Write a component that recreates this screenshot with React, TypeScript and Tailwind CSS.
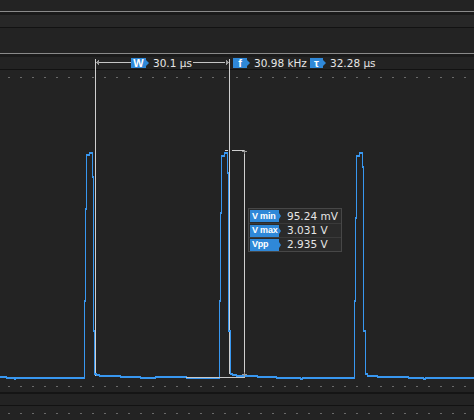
import React from "react";

type TagProps = {
  label: string;
  width: string;
};

// blue marker tag with a small arrow tip on the right
const Tag = ({ label, width }: TagProps) => (
  <span className="flex items-center">
    <span
      className={`flex h-[10px] items-center justify-center bg-[#2f88d8] font-['Liberation_Sans',sans-serif] text-[11px] font-bold leading-none text-white ${width}`}
    >
      {label}
    </span>
    <span className="h-0 w-0 border-y-[3px] border-l-[3px] border-y-transparent border-l-[#2f88d8]" />
  </span>
);

const dots = Array.from({ length: 39 }, (_, i) => 8 + i * 12);

const DotRow = () => (
  <div className="flex gap-[10px] pl-[8px]">
    {dots.map(d => (
      <span key={d} className="h-px w-[2px] shrink-0 bg-[#6a6a6a]" />
    ))}
  </div>
);

const readings = [
  { label: "V min", value: "95.24 mV" },
  { label: "V max", value: "3.031 V" },
  { label: "Vpp", value: "2.935 V" },
];

const wave =
  "M0 376.5 H6 V377.5 H14 V378.5 H15 V377.5 H84.5 V300 H85.5 V208 H86.5 V154 H89 V152.5 H92.5 V176 H93.5 V330 H94.5 V373 H96 V374.5 H99 V375.5 H120 V376.5 H140 V377.5 H155 V376.5 H186 V377.5 H219.5 V300 H220.5 V212 H221.5 V155 H224 V152.5 H227.5 V172 H228.5 V330 H230.5 V373 H232 V374.5 H236 V375.5 H257 V376.5 H276 V377.5 H300 V378.5 H302 V377.5 H354.5 V300 H355.5 V217 H356.5 V155 H359 V152.5 H362.5 V166 H363.5 V330 H365.5 V373 H367 V375.5 H377 V376 H408 V377.5 H423 V378.5 H425 V377.5 H474";

export default function App() {
  return (
    <div className="flex h-[420px] w-[474px] flex-col overflow-hidden bg-[#232323] font-['DejaVu_Sans',sans-serif] text-[#e6e6e6]">
      <div className="h-[11px]" />
      <div className="h-px bg-[#8a8a8a]" />
      <div className="h-[3px] bg-[#1a1a1a]" />
      <div className="h-[12px] bg-[#272727]" />
      <div className="h-px bg-[#121212]" />
      <div className="h-[25px]" />
      <div className="h-px bg-[#8a8a8a]" />
      <div className="h-[3px] bg-[#1a1a1a]" />

      {/* measurement row */}
      <div className="flex h-[12px] items-center pl-[131px] text-[10.5px] leading-[12px]">
        <Tag label="W" width="w-[15px]" />
        <span className="ml-[4px] w-[80px] whitespace-nowrap">30.1 µs</span>
        <Tag label="f" width="w-[14px]" />
        <span className="ml-[4px] w-[56px] whitespace-nowrap">30.98 kHz</span>
        <Tag label="τ" width="w-[13px]" />
        <span className="ml-[4px] whitespace-nowrap">32.28 µs</span>
      </div>
      <div className="h-px bg-[#121212]" />

      {/* plot */}
      <div className="relative h-[322px]">
        <svg
          width="474"
          height="322"
          viewBox="0 70 474 322"
          className="block overflow-visible"
          shapeRendering="crispEdges"
        >
          {dots.map(d => (
            <rect key={`t${d}`} x={d} y={77} width={2} height={1} fill="#6a6a6a" />
          ))}
          {dots.map(d => (
            <rect key={`b${d}`} x={d} y={386} width={2} height={1} fill="#6a6a6a" />
          ))}

          {/* cursors */}
          <g stroke="#cfcfcf" strokeWidth="1" fill="none">
            <path d="M95.5 59 V376" />
            <path d="M229.5 59 V374" />
            <path d="M99 62.5 H131 M193 62.5 H225" stroke="#c4c4c4" />
            <path d="M225 150.5 H228 M232 150.5 H245" />
            <path d="M244.5 150 V377" />
          </g>
          <polygon points="96,62.5 99,60 99,65" fill="#9a9a9a" />
          <polygon points="229,62.5 226,60 226,65" fill="#9a9a9a" />

          <path d={wave} fill="none" stroke="#3897f0" strokeWidth="1" />
          <path d={wave} fill="none" stroke="#3897f0" strokeWidth="1" transform="translate(0 1)" />

          <path d="M186 377.5 H245" stroke="#c8c8c8" strokeWidth="1" />
          <path d="M242 151.5 H247 M244.5 150 V154" stroke="#9a9a9a" strokeWidth="1" />
          <path d="M242 374.5 H247 M244.5 372 V377" stroke="#9a9a9a" strokeWidth="1" />
        </svg>

        {/* readout box */}
        <div className="absolute left-[248px] top-[138px] flex w-[94px] flex-col border border-[#474747] bg-[#2a2a2a]">
          {readings.map((r, i) => (
            <div
              key={r.label}
              className={`flex h-[14px] items-center pl-px ${i > 0 ? "border-t border-[#3a3a3a]" : ""}`}
            >
              <span className="flex items-center">
                <span className="flex h-[12px] w-[29px] items-center overflow-visible whitespace-nowrap bg-[#2f88d8] pl-[2px] font-['Liberation_Sans',sans-serif] text-[9px] font-bold leading-none tracking-[-0.2px] text-white">
                  {r.label}
                </span>
                <span className="h-0 w-0 border-y-[3px] border-l-[2px] border-y-transparent border-l-[#2f88d8]" />
              </span>
              <span className="ml-[6px] whitespace-nowrap text-[10.5px] leading-none">{r.value}</span>
            </div>
          ))}
        </div>
      </div>

      <div className="h-[2px] bg-[#151515]" />
      <div className="h-[11px]" />
      <div className="h-px bg-[#121212]" />
      <div className="flex h-[14px] flex-col justify-start pt-[7px]">
        <DotRow />
      </div>
    </div>
  );
}
